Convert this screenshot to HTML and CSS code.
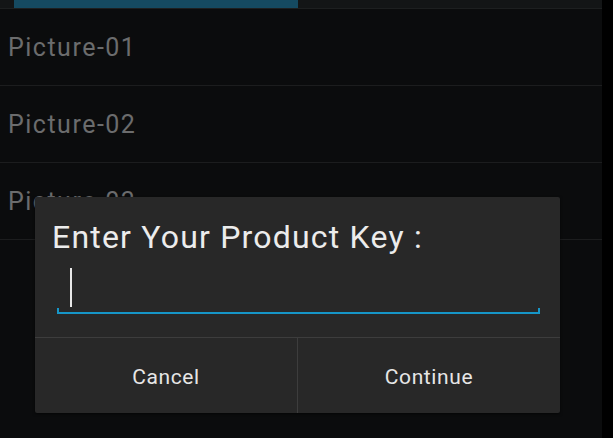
FILE: index.html
```html
<!DOCTYPE html>
<html>
<head>
<meta charset="utf-8">
<link rel="stylesheet" href="styles.css">
</head>
<body>
<div class="screen">
  <div class="main">
    <div class="tabbar"><div class="indicator"></div></div>
    <div class="row">Picture-01</div>
    <div class="row">Picture-02</div>
    <div class="row">Picture-03</div>
  </div>
  <div class="strip"></div>
</div>
<div class="dialog">
  <div class="title">Enter Your Product Key :</div>
  <div class="field">
    <div class="cursor"></div>
    <div class="underline"></div>
  </div>
  <div class="buttons">
    <div class="btn">Cancel</div>
    <div class="btn">Continue</div>
  </div>
</div>
</body>
</html>
```
FILE: styles.css
```css
html, body {
  margin: 0;
  padding: 0;
  width: 613px;
  height: 438px;
  overflow: hidden;
  background: #0b0c0d;
  font-family: Roboto, "Liberation Sans", sans-serif;
}
.screen {
  display: flex;
  width: 613px;
  height: 438px;
}
.main {
  width: 602px;
  display: flex;
  flex-direction: column;
  background: #0b0c0d;
}
.strip {
  flex: 1;
  background: #000;
}
.tabbar {
  height: 8px;
  background: #131516;
  border-bottom: 1px solid #1d1f20;
  display: flex;
}
.indicator {
  margin-left: 14px;
  width: 284px;
  height: 8px;
  background: #154a61;
}
.row {
  border-bottom: 1px solid #1c1d1e;
  color: #6b6c6d;
  font-size: 25px;
  letter-spacing: 1.5px;
  padding-left: 8px;
  display: flex;
  align-items: center;
  box-sizing: border-box;
  height: 77px;
}
.dialog {
  position: absolute;
  left: 35px;
  top: 197px;
  width: 525px;
  height: 216px;
  background: #282828;
  border-radius: 2px;
  box-shadow: 0 1px 3px rgba(0,0,0,0.6);
  display: flex;
  flex-direction: column;
}
.title {
  color: #ececec;
  font-size: 32px;
  letter-spacing: 1.2px;
  padding: 20px 0 0 17px;
  height: 48px;
  line-height: 40px;
}
.field {
  position: relative;
  height: 72px;
  margin: 0 20px 0 22px;
}
.cursor {
  position: absolute;
  left: 13px;
  top: 3px;
  width: 2px;
  height: 39px;
  background: #e8e8e8;
}
.underline {
  position: absolute;
  left: 0;
  right: 0;
  top: 43px;
  height: 4px;
  border: 2px solid #1696c8;
  border-top: none;
}
.buttons {
  flex: 1;
  display: flex;
  border-top: 1px solid #3d3d3d;
}
.btn {
  flex: 1;
  display: flex;
  align-items: center;
  justify-content: center;
  color: #e6e6e6;
  font-size: 21px;
  letter-spacing: 0.6px;
  padding-top: 3px;
}
.btn + .btn {
  border-left: 1px solid #3d3d3d;
}
```
